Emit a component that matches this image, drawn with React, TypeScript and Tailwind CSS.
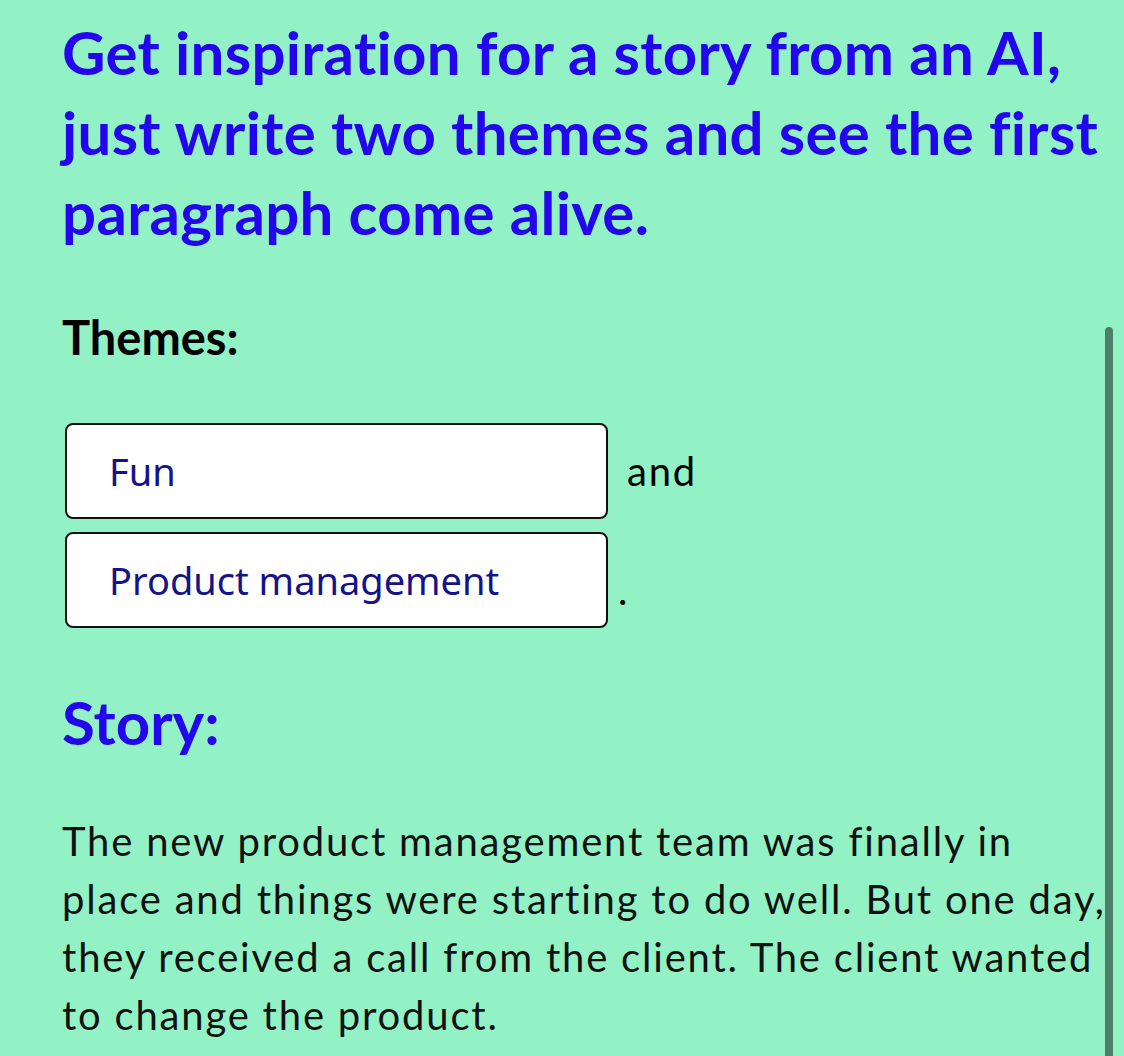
import React from 'react';

const App: React.FC = () => {
  return (
    <div className="relative min-h-[1056px] w-full overflow-hidden bg-[#93f2c5] font-['Lato',sans-serif]">
      <div className="pl-[62px] pr-[20px] pt-[12px]">
        <h1 className="text-[60px] font-bold leading-[80px] tracking-[0.3px] text-[#2306ec]">
          <span className="block whitespace-nowrap [font-variant-ligatures:no-common-ligatures]">Get inspiration for a story from an AI,</span>
          <span className="block whitespace-nowrap">just write two themes and see the first</span>
          <span className="block whitespace-nowrap">paragraph come alive.</span>
        </h1>

        <h2 className="mt-[57px] text-[47px] font-bold leading-[56px] text-black">Themes:</h2>

        <div className="mt-[58px] ml-[3px] flex flex-col gap-[13px]">
          <div className="flex items-center">
            <div className="flex h-[96px] w-[543px] items-center rounded-[8px] border-2 border-[#111] bg-white pl-[42px] font-['Noto_Sans',sans-serif] text-[38px] text-[#15138a]">
              Fun
            </div>
            <span className="ml-[19px] text-[40px] tracking-[1.8px] text-black">and</span>
          </div>
          <div className="flex items-center">
            <div className="flex h-[96px] w-[543px] items-center rounded-[8px] border-2 border-[#111] bg-white pl-[42px] font-['Noto_Sans',sans-serif] text-[38px] text-[#15138a]">
              Product management
            </div>
            <span className="ml-[10px] mt-[20px] text-[40px] text-black">.</span>
          </div>
        </div>

        <h2 className="mt-[58px] text-[60px] font-bold leading-[72px] text-[#2306ec]">Story:</h2>

        <p className="mt-[54px] text-[40px] leading-[58px] tracking-[1.8px] text-[#111]">
          <span className="block whitespace-nowrap">The new product management team was finally in</span>
          <span className="block whitespace-nowrap">place and things were starting to do well. But one day,</span>
          <span className="block whitespace-nowrap">they received a call from the client. The client wanted</span>
          <span className="block whitespace-nowrap">to change the product.</span>
        </p>
      </div>

      <div className="absolute left-[1105px] top-[327px] h-[760px] w-[8px] rounded-full bg-[#4b7f68]" />
    </div>
  );
};

export default App;
